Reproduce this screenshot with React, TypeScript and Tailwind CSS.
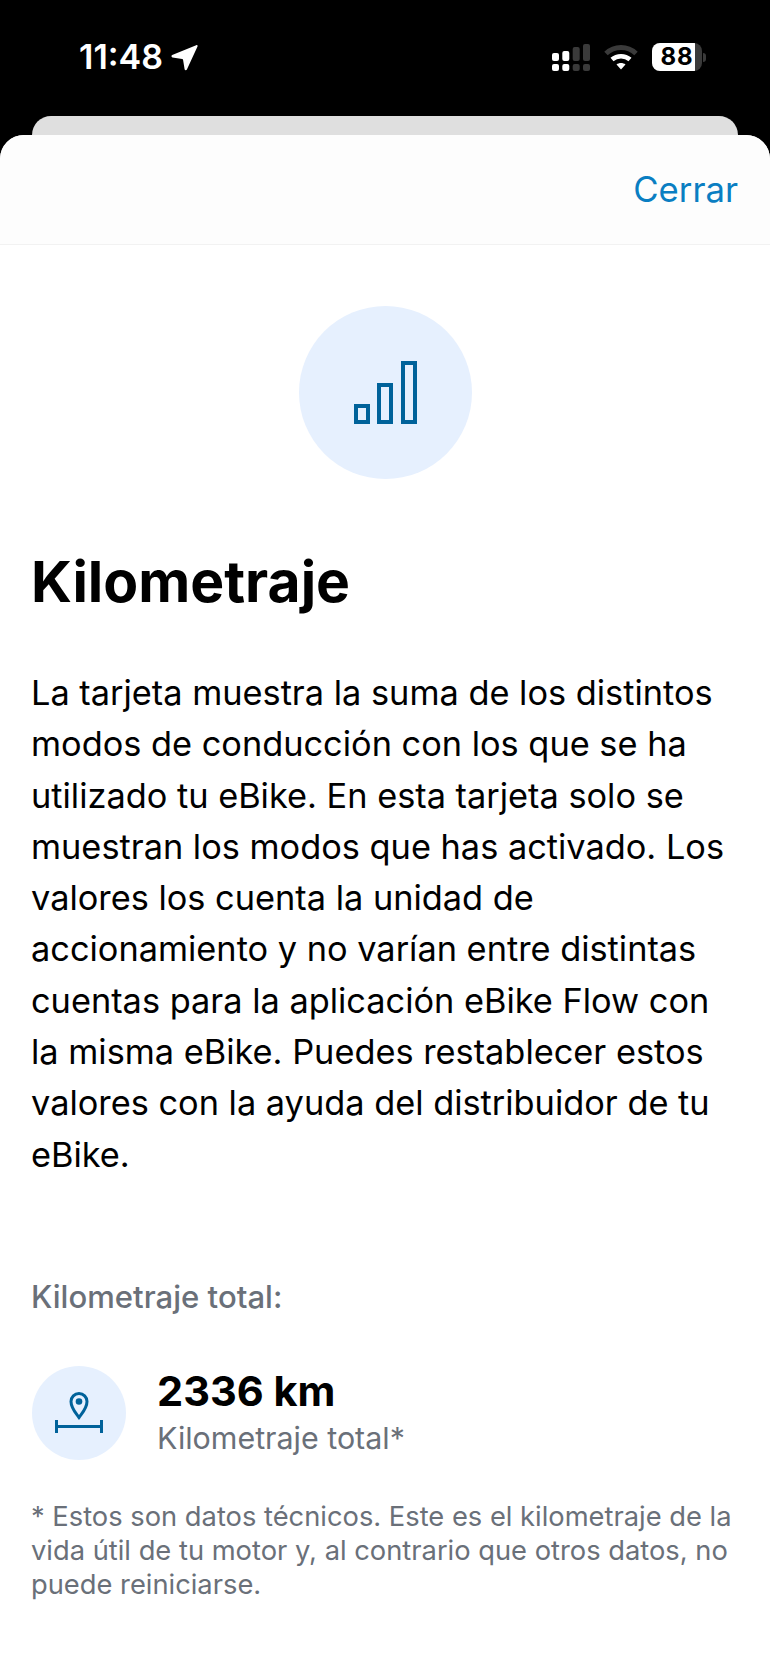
const bodyText =
  "La tarjeta muestra la suma de los distintos modos de conducción con los que se ha utilizado tu eBike. En esta tarjeta solo se muestran los modos que has activado. Los valores los cuenta la unidad de accionamiento y no varían entre distintas cuentas para la aplicación eBike Flow con la misma eBike. Puedes restablecer estos valores con la ayuda del distribuidor de tu eBike.";

function LocationArrow() {
  return (
    <svg width="27" height="27" viewBox="0 0 27 27" fill="#fff">
      <path d="M25.200 1.200c.9-.4 1.700.4 1.300 1.300L15.900 25.400c-.5 1.100-2.100 1-2.300-.2l-1.500-9.300c-.1-.5-.4-.8-.9-.9l-9.700-1.600c-1.200-.2-1.400-1.800-.3-2.300z" />
    </svg>
  );
}

function SignalIcon() {
  return (
    <svg width="38" height="27" viewBox="0 0 38 27">
      <rect x="0" y="9" width="7" height="8" rx="2" fill="#fff" />
      <rect x="0" y="20" width="7" height="7" rx="2" fill="#fff" />
      <rect x="10.300" y="7" width="7" height="10" rx="2" fill="#fff" />
      <rect x="10.300" y="20" width="7" height="7" rx="2" fill="#fff" />
      <rect x="20.700" y="3" width="7" height="14" rx="2" fill="#3a3a3a" />
      <rect x="20.700" y="20" width="7" height="7" rx="2" fill="#3a3a3a" />
      <rect x="31" y="0" width="7" height="17" rx="2" fill="#3a3a3a" />
      <rect x="31" y="20" width="7" height="7" rx="2" fill="#3a3a3a" />
    </svg>
  );
}

function WifiIcon() {
  return (
    <svg width="34" height="26" viewBox="0 0 34 26" fill="none">
      <path d="M2 9.500C10.500 1.500 23.500 1.500 32 9.500" stroke="#3a3a3a" strokeWidth="5" />
      <path d="M8 15.500c5-4.500 13-4.500 18 0" stroke="#fff" strokeWidth="4.500" />
      <path d="M12.500 20.500 17 25.500l4.500-5c-2.500-2-6.500-2-9 0z" fill="#fff" />
    </svg>
  );
}

function BatteryIcon() {
  return (
    <div className="flex items-center">
      <div className="relative flex h-[28px] w-[50px] items-center justify-center overflow-hidden rounded-[8px] bg-[#3a3a3a]">
        <div className="absolute inset-y-0 left-0 w-[43px] bg-white" />
        <span className="relative text-[24px] font-bold leading-none tracking-[1px] text-black">88</span>
      </div>
      <div className="ml-[1px] h-[9px] w-[3px] rounded-r-full bg-[#3a3a3a]" />
    </div>
  );
}

function BarsIcon() {
  return (
    <svg width="63" height="63" viewBox="0 0 63 63" fill="none" stroke="#00629a" strokeWidth="4">
      <rect x="2" y="45" width="12" height="16" />
      <rect x="25" y="24" width="12" height="37" />
      <rect x="49" y="2" width="12" height="59" />
    </svg>
  );
}

function DistanceIcon() {
  return (
    <svg width="48" height="42" viewBox="0 0 48 42" fill="none" stroke="#00629a" strokeWidth="3">
      <path d="M24 25.500C20 20 16 16 16 9.500a8 8 0 0 1 16 0c0 6.500-4 10.500-8 16z" />
      <circle cx="24" cy="9.500" r="3.300" fill="#00629a" stroke="none" />
      <path d="M1.500 28v13M46.500 28v13M1.500 34.500h45" />
    </svg>
  );
}

export default function App() {
  return (
    <div className="h-[1669px] w-[770px] overflow-hidden bg-black font-['Inter',sans-serif]">
      {/* Status bar */}
      <div className="flex h-[116px] items-start justify-between pl-[79px] pr-[64px] pt-[43px]">
        <div className="flex items-center gap-[8px] text-white">
          <span className="text-[34px] font-semibold leading-[28px]">11:48</span>
          <LocationArrow />
        </div>
        <div className="flex items-center gap-[14px]">
          <SignalIcon />
          <WifiIcon />
          <BatteryIcon />
        </div>
      </div>

      <div className="mx-[32px] h-[19px] rounded-t-[20px] bg-[#dfdfdf]" />

      {/* Sheet */}
      <div className="h-[1534px] rounded-t-[24px] bg-white">
        <div className="flex h-[110px] items-center justify-end rounded-t-[24px] border-b border-[#f2f2f2] bg-[#fdfdfd] pr-[32px]">
          <span className="text-[34.700px] leading-none text-[#0a7ec2]">Cerrar</span>
        </div>

        <div className="px-[32px]">
          <div className="mt-[61px] flex justify-center">
            <div className="flex h-[173px] w-[173px] items-center justify-center rounded-full bg-[#e6f0fe]">
              <BarsIcon />
            </div>
          </div>

          <h1 className="-ml-px mt-[71px] text-[57px] font-bold leading-[64px] text-black">Kilometraje</h1>

          <p className="-ml-px mt-[53px] text-[34.350px] leading-[51.300px] text-black">{bodyText}</p>

          <p className="-ml-px mt-[97px] text-[31.100px] font-medium leading-[40px] text-[#6a7079]">Kilometraje total:</p>

          <div className="mt-[49px] flex items-center gap-[32px]">
            <div className="flex h-[94px] w-[94px] items-center justify-center rounded-full bg-[#e6f0fe]">
              <DistanceIcon />
            </div>
            <div className="-ml-px">
              <div className="-mt-px text-[41.500px] font-bold leading-[48px] text-black">2336 km</div>
              <div className="mt-[3px] text-[30.400px] leading-[40px] text-[#6a7079]">Kilometraje total*</div>
            </div>
          </div>

          <p className="-ml-px mt-[40px] text-[27.300px] leading-[34px] text-[#6a7079]">
            * Estos son datos técnicos. Este es el kilometraje de la vida útil de tu motor y, al contrario que otros datos, no puede reiniciarse.
          </p>
        </div>
      </div>
    </div>
  );
}
